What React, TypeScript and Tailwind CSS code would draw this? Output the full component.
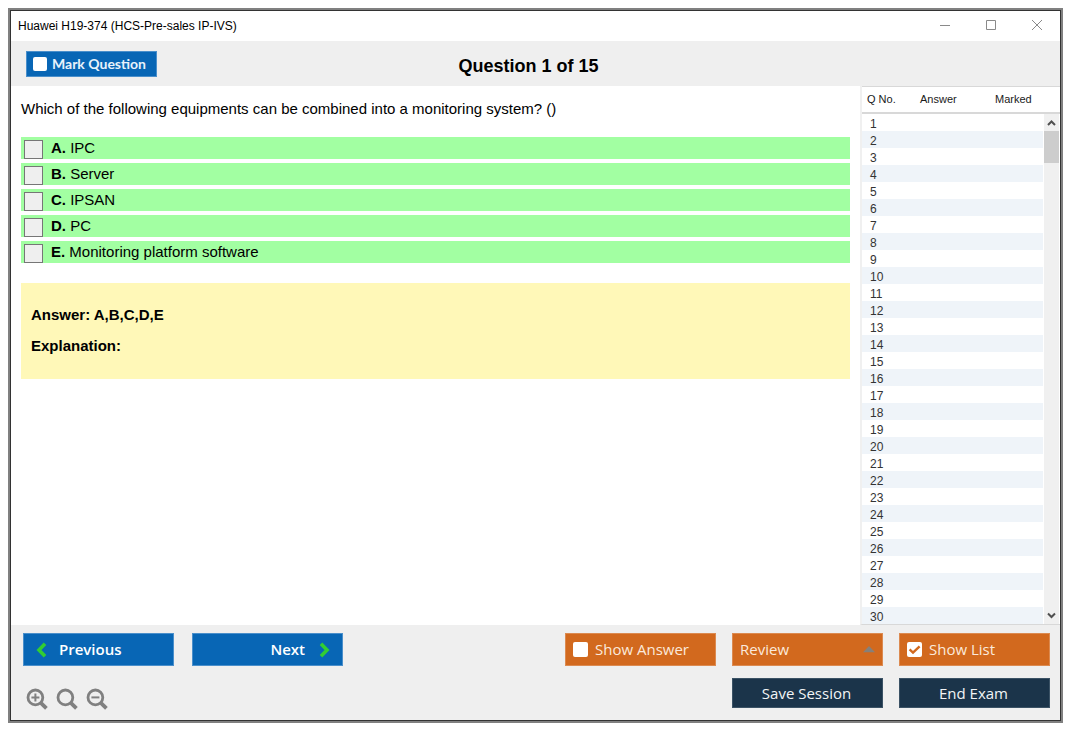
import { useState } from "react";
import type { ReactNode } from "react";

const options = [
  { letter: "A", text: "IPC" },
  { letter: "B", text: "Server" },
  { letter: "C", text: "IPSAN" },
  { letter: "D", text: "PC" },
  { letter: "E", text: "Monitoring platform software" },
];

const rows = Array.from({ length: 30 }, (_, i) => i + 1);

function TitleBar() {
  return (
    <div className="flex h-[30px] shrink-0 items-center bg-white">
      <div className="flex-1 pl-[7px] text-xs text-black">Huawei H19-374 (HCS-Pre-sales IP-IVS)</div>
      <div className="flex items-center text-[#8a8a8a]">
        <button type="button" aria-label="Minimize" className="flex w-[46px] justify-center">
          <svg width="12" height="12" viewBox="0 0 12 12" fill="none" stroke="currentColor">
            <path d="M1 5.5h10" />
          </svg>
        </button>
        <button type="button" aria-label="Maximize" className="flex w-[46px] justify-center">
          <svg width="12" height="12" viewBox="0 0 12 12" fill="none" stroke="currentColor">
            <path d="M1.5 0.5h9v9h-9z" />
          </svg>
        </button>
        <button type="button" aria-label="Close" className="flex w-[46px] justify-center">
          <svg width="12" height="12" viewBox="0 0 12 12" fill="none" stroke="currentColor">
            <path d="M1 0l10 10M11 0L1 10" />
          </svg>
        </button>
      </div>
    </div>
  );
}

function CheckButton({
  label,
  initial = false,
  className,
  boxClassName,
}: {
  label: string;
  initial?: boolean;
  className: string;
  boxClassName: string;
}) {
  const [checked, setChecked] = useState(initial);
  return (
    <label className={className}>
      <span className="grid shrink-0">
        <input
          type="checkbox"
          checked={checked}
          onChange={(e) => setChecked(e.target.checked)}
          className={boxClassName}
        />
        {checked && (
          <svg
            className="pointer-events-none col-start-1 row-start-1 h-[15px] w-[15px]"
            viewBox="0 0 15 15"
            fill="none"
            stroke="#d2691e"
            strokeWidth="2.4"
          >
            <path d="M2.6 7.4L6 10.6L12.6 4.4" />
          </svg>
        )}
      </span>
      {label}
    </label>
  );
}

function QuestionPane() {
  return (
    <section className="min-w-0 flex-1 bg-white pt-3 pr-[10px] pl-[10px] text-[15px] leading-[22px] text-black">
      <p>Which of the following equipments can be combined into a monitoring system? ()</p>
      <ul className="mt-[17px] flex flex-col gap-1">
        {options.map((o) => (
          <li key={o.letter} className="bg-[#a2ffa2]">
            <label className="flex h-[22px] gap-2 pl-[3px]">
              <input
                type="checkbox"
                className="mt-[3px] h-[19px] w-[19px] shrink-0 appearance-none border border-[#767676] bg-[#efefef] checked:bg-[#767676]"
              />
              <span>
                <b>{o.letter}.</b> {o.text}
              </span>
            </label>
          </li>
        ))}
      </ul>
      <div className="mt-5 flex h-24 flex-col gap-[9px] bg-[#fff8b8] pt-[21px] pl-[10px] font-bold">
        <p>Answer: A,B,C,D,E</p>
        <p>Explanation:</p>
      </div>
    </section>
  );
}

function QuestionList() {
  return (
    <aside className="flex w-[200px] shrink-0 overflow-hidden border-b border-l-2 border-b-[#d8d8d8] border-l-[#f0f0f0] bg-white">
      <div className="min-w-0 flex-1">
        <table className="w-full table-fixed border-separate border-spacing-0 text-left text-[11px]">
          <thead>
            <tr className="h-[28px] text-[#1a1a1a]">
              <th className="w-[58px] border-t border-b-2 border-[#d8d8d8] p-0 pl-[5px] font-normal">Q No.</th>
              <th className="w-[75px] border-t border-b-2 border-[#d8d8d8] p-0 font-normal">Answer</th>
              <th className="border-t border-b-2 border-[#d8d8d8] p-0 font-normal">Marked</th>
            </tr>
          </thead>
          <tbody className="text-xs leading-[14px] text-[#333333]">
            {rows.map((n) => (
              <tr key={n} className="h-[17px] even:bg-[#eff4f9]">
                <td className="p-0 pt-[3px] pl-2">{n}</td>
                <td className="p-0" />
                <td className="p-0" />
              </tr>
            ))}
          </tbody>
        </table>
      </div>
      <div className="flex w-[17px] shrink-0 flex-col">
        <div className="h-[28px] shrink-0 border-t border-b-2 border-[#d8d8d8]" />
        <div className="mx-px flex flex-1 flex-col bg-[#f0f0f0] text-[#505050]">
          <button type="button" aria-label="Scroll up" className="flex h-[17px] items-center justify-center">
            <svg width="9" height="9" viewBox="0 0 9 9" fill="none" stroke="currentColor" strokeWidth="2">
              <path d="M1 7L4.5 3.5L8 7" />
            </svg>
          </button>
          <div className="h-8 bg-[#cdcdcd]" />
          <div className="flex-1" />
          <button type="button" aria-label="Scroll down" className="flex h-[17px] items-center justify-center">
            <svg width="9" height="9" viewBox="0 0 9 9" fill="none" stroke="currentColor" strokeWidth="2">
              <path d="M1 2.5L4.5 6L8 2.5" />
            </svg>
          </button>
        </div>
      </div>
    </aside>
  );
}

function ZoomButton({ label, children }: { label: string; children?: ReactNode }) {
  return (
    <button type="button" aria-label={label} className="text-[#808080]">
      <svg width="22" height="22" viewBox="0 0 22 22" fill="none" stroke="currentColor">
        <circle cx="9.4" cy="9.4" r="7.4" strokeWidth="2.8" />
        <path d="M14.6 14.6L20.4 20.4" strokeWidth="3.8" />
        {children}
      </svg>
    </button>
  );
}

const orange =
  "flex h-[33px] w-[151px] items-center border border-[#dc8a50] bg-[#d2691e] px-[7px] font-['Open_Sans',sans-serif] text-[15px] text-[#fbe9dc]";
const navy =
  "h-[30px] w-[151px] border border-[#3b5265] bg-[#1b344a] pr-[2px] font-['Open_Sans',sans-serif] text-[15px] text-[#f2f4f6]";
const blue =
  "flex h-[33px] w-[151px] items-center border border-[#4a8fcb] bg-[#0866b5] font-['Open_Sans',sans-serif] text-[15px] font-semibold text-white";
const box = "col-start-1 row-start-1 h-[15px] w-[15px] appearance-none rounded-[2px] bg-white";

function Footer() {
  return (
    <footer className="flex h-[95px] shrink-0 justify-between bg-[#efefef] pt-2 pr-[10px] pl-3">
      <div className="flex flex-col">
        <div className="flex gap-[18px]">
          <button type="button" className={blue + " gap-3 pl-3"}>
            <svg width="11" height="16" viewBox="0 0 11 16" fill="none" stroke="#32cd32" strokeWidth="3.6">
              <path d="M9 1.8L3 8L9 14.2" />
            </svg>
            Previous
          </button>
          <button type="button" className={blue + " justify-end gap-[14px] pr-3"}>
            Next
            <svg width="11" height="16" viewBox="0 0 11 16" fill="none" stroke="#32cd32" strokeWidth="3.6">
              <path d="M2 1.8L8 8L2 14.2" />
            </svg>
          </button>
        </div>
        <div className="mt-[22px] flex gap-2 pl-[3px]">
          <ZoomButton label="Zoom in">
            <path d="M5.4 9.4h8M9.4 5.4v8" strokeWidth="2" />
          </ZoomButton>
          <ZoomButton label="Reset zoom" />
          <ZoomButton label="Zoom out">
            <path d="M5.4 9.4h8" strokeWidth="2" />
          </ZoomButton>
        </div>
      </div>
      <div className="flex flex-col items-end gap-3">
        <div className="flex gap-4">
          <CheckButton label="Show Answer" className={orange + " gap-[7px]"} boxClassName={box} />
          <button type="button" aria-haspopup="menu" className={orange + " justify-between"}>
            Review
            <svg width="12" height="8" viewBox="0 0 12 8" fill="#86807a">
              <path d="M6 0L12 6.2H0z" />
            </svg>
          </button>
          <CheckButton label="Show List" initial className={orange + " gap-[7px]"} boxClassName={box} />
        </div>
        <div className="flex gap-4">
          <button type="button" className={navy}>
            Save Session
          </button>
          <button type="button" className={navy}>
            End Exam
          </button>
        </div>
      </div>
    </footer>
  );
}

export default function App() {
  return (
    <div className="h-screen bg-white pt-2 pr-3 pb-3 pl-2 font-['Liberation_Sans',Arial,sans-serif]">
      <div className="h-full border-2 border-[#808080]">
        <main className="flex h-full flex-col border border-[#333333] bg-white">
          <TitleBar />
          <header className="grid h-[45px] shrink-0 grid-cols-[1fr_auto_1fr] items-center bg-[#efefef] pr-[29px] pl-[15px]">
            <CheckButton
              label="Mark Question"
              className="flex h-[26px] w-[131px] items-center gap-[5px] border border-[#4a8fcb] bg-[#0866b5] pl-[6px] font-[Lato,sans-serif] text-[14px] font-bold text-[#e8f2fb]"
              boxClassName="col-start-1 row-start-1 h-[14px] w-[14px] appearance-none rounded-[2px] bg-white"
            />
            <h1 className="pt-1 text-lg font-bold text-black">Question 1 of 15</h1>
          </header>
          <div className="flex min-h-0 flex-1">
            <QuestionPane />
            <QuestionList />
          </div>
          <Footer />
        </main>
      </div>
    </div>
  );
}
